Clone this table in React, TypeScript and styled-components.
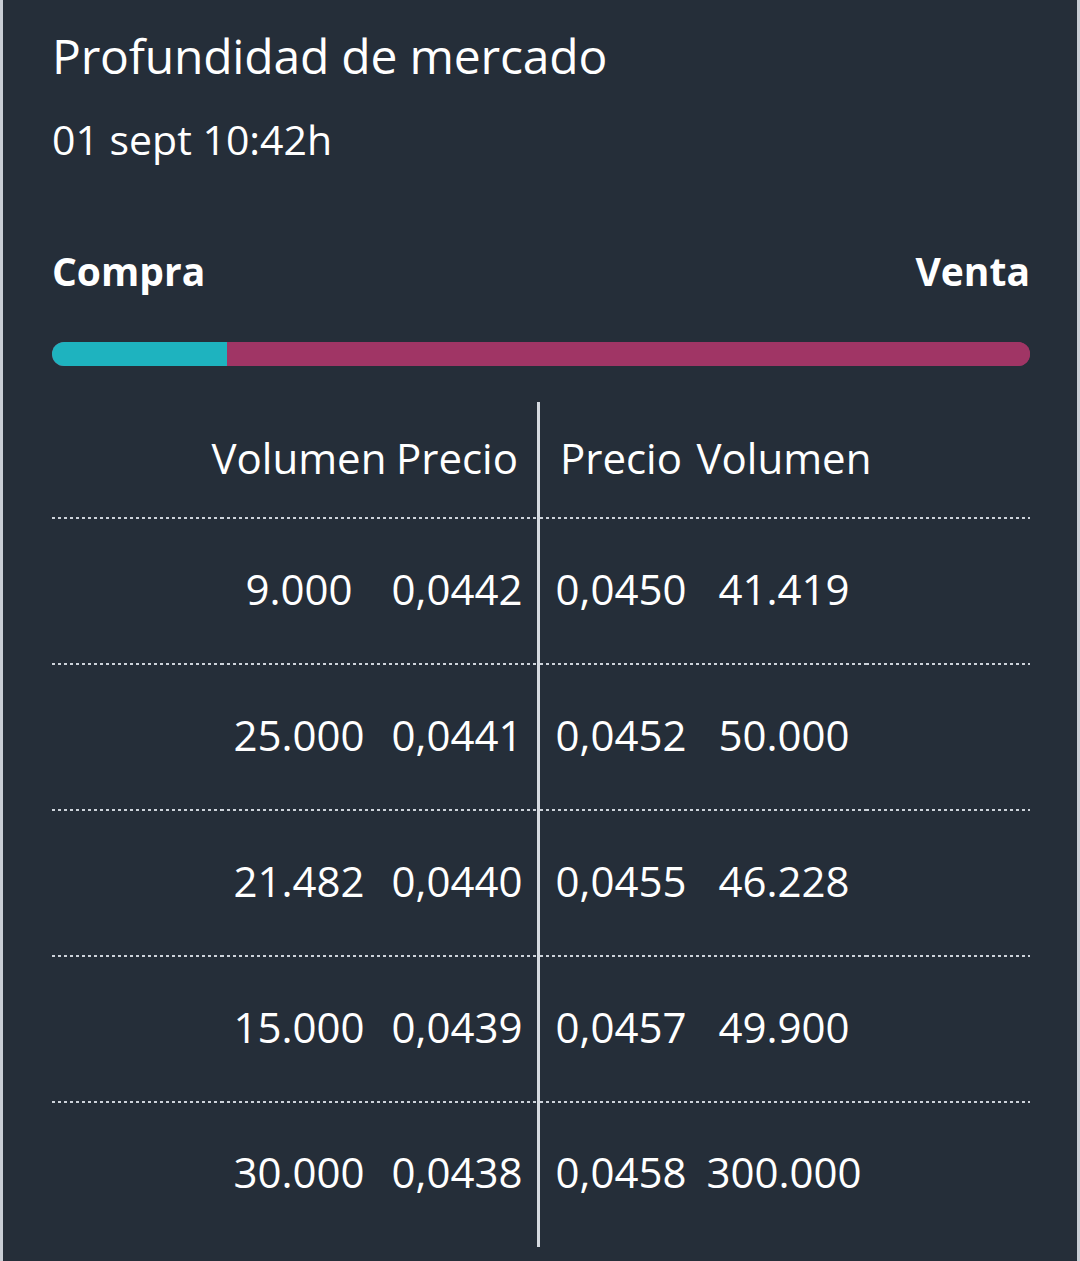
import React from "react";
import styled, { createGlobalStyle } from "styled-components";

const GlobalStyle = createGlobalStyle`
  html, body { margin: 0; padding: 0; background: #252e39; }
  body { font-family: "Open Sans", "Noto Sans", sans-serif; }
  * { box-sizing: border-box; }
`;

const Card = styled.div`
  min-height: 1261px;
  background: #252e39;
  border-left: 3px solid #c9ced5;
  border-right: 3px solid #c9ced5;
  padding: 27px 47px 0 49px;
  color: #ffffff;
  display: flex;
  flex-direction: column;
`;

const Title = styled.h1`
  margin: 0;
  font-size: 48px;
  line-height: 58px;
  font-weight: 400;
  letter-spacing: -0.2px;
`;

const Subtitle = styled.div`
  margin-top: 29px;
  font-size: 41px;
  line-height: 50px;
  font-weight: 400;
`;

const SidesRow = styled.div`
  margin-top: 83px;
  display: flex;
  justify-content: space-between;
  font-size: 39px;
  line-height: 48px;
  font-weight: 700;
`;

const Bar = styled.div`
  margin-top: 47px;
  height: 24px;
  border-radius: 12px;
  overflow: hidden;
  display: flex;
  background: #a03565;
`;

const BarSegment = styled.div<{ $color: string }>`
  height: 100%;
  background: ${(p) => p.$color};
`;

const Table = styled.div`
  margin-top: 36px;
  display: grid;
  grid-template-columns: 169px 156px 160px 3px 162px 164px 1fr;
`;

const Divider = styled.div`
  grid-column: 4;
  grid-row: 1 / span 6;
  background: #d5dae0;
  width: 3px;
  z-index: 1;
`;

const Cell = styled.div<{ $col: number; $row: number; $height: number; $dotted: boolean }>`
  grid-column: ${(p) => p.$col};
  grid-row: ${(p) => p.$row};
  height: ${(p) => p.$height}px;
  display: flex;
  align-items: center;
  justify-content: center;
  font-size: 42px;
  line-height: 50px;
  white-space: nowrap;
  padding-bottom: 6px;
  ${(p) =>
    p.$dotted
      ? `background-image: repeating-linear-gradient(90deg, #cdd3da 0 3px, transparent 3px 6px);
         background-size: 100% 2px;
         background-repeat: no-repeat;
         background-position: left bottom;`
      : ""}
`;

const header = ["Volumen", "Precio", "Precio", "Volumen"];
const rows: string[][] = [
  ["9.000", "0,0442", "0,0450", "41.419"],
  ["25.000", "0,0441", "0,0452", "50.000"],
  ["21.482", "0,0440", "0,0455", "46.228"],
  ["15.000", "0,0439", "0,0457", "49.900"],
  ["30.000", "0,0438", "0,0458", "300.000"],
];

const dataCols = [2, 3, 5, 6];

function TableRow({ cells, row, height, dotted }: { cells: string[]; row: number; height: number; dotted: boolean }) {
  return (
    <>
      {[1, 2, 3, 5, 6, 7].map((col) => {
        const idx = dataCols.indexOf(col);
        return (
          <Cell key={col} $col={col} $row={row} $height={height} $dotted={dotted}>
            {idx >= 0 ? cells[idx] : null}
          </Cell>
        );
      })}
    </>
  );
}

export default function App() {
  const heights = [117, 146, 146, 146, 146, 144];
  return (
    <>
      <GlobalStyle />
      <Card>
        <Title>Profundidad de mercado</Title>
        <Subtitle>01 sept 10:42h</Subtitle>
        <SidesRow>
          <span>Compra</span>
          <span>Venta</span>
        </SidesRow>
        <Bar>
          <BarSegment $color="#1eb3bf" style={{ width: "17.9%" }} />
          <BarSegment $color="#a03565" style={{ flex: 1 }} />
        </Bar>
        <Table>
          <Divider />
          <TableRow cells={header} row={1} height={heights[0]} dotted />
          {rows.map((r, i) => (
            <TableRow key={i} cells={r} row={i + 2} height={heights[i + 1]} dotted={i < rows.length - 1} />
          ))}
        </Table>
      </Card>
    </>
  );
}
